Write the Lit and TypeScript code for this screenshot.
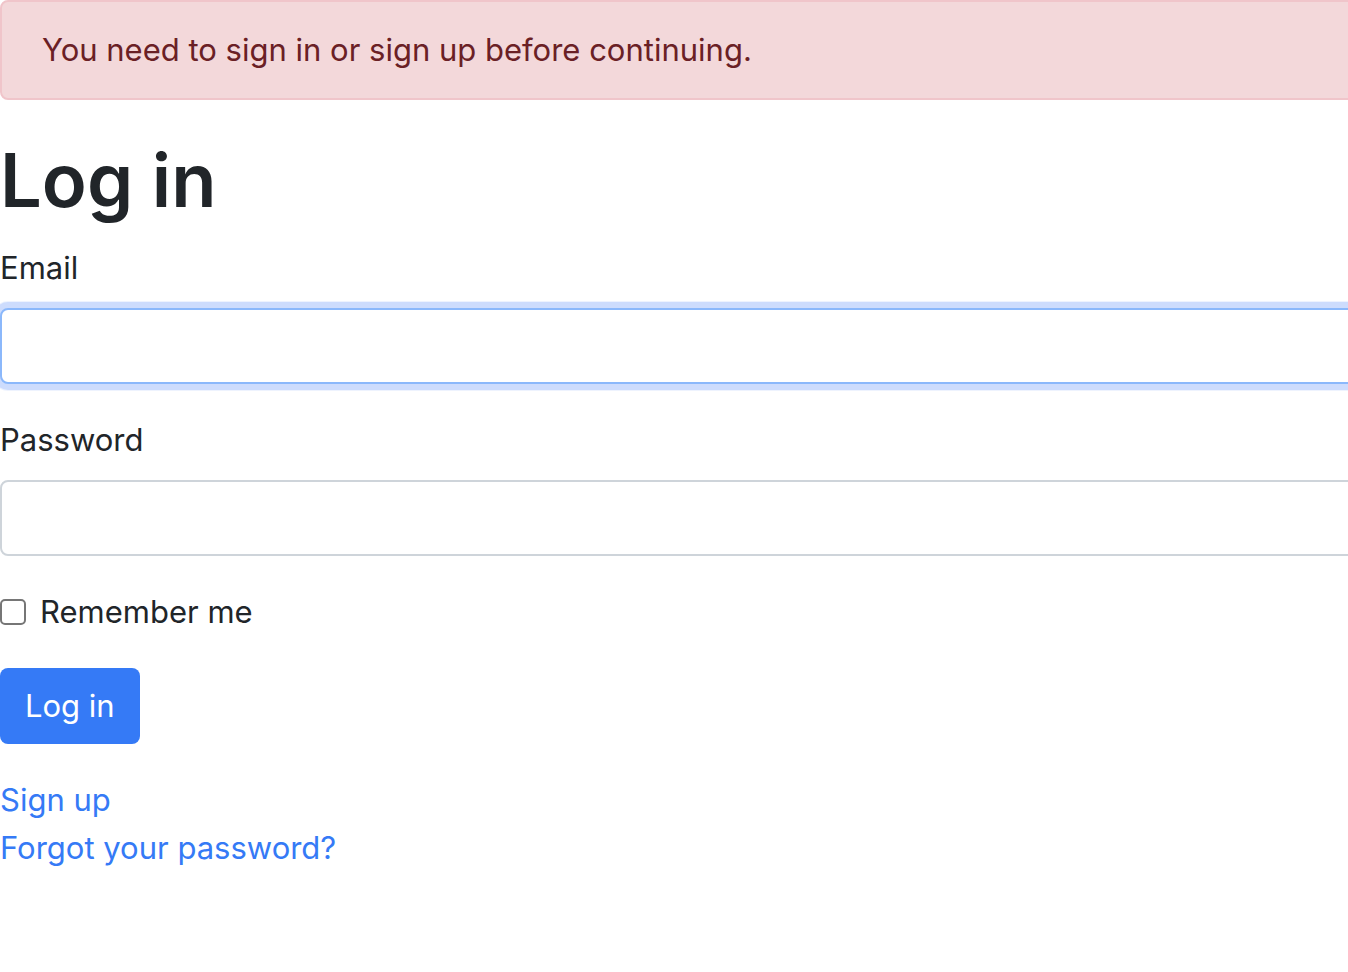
import { LitElement, html, css } from "lit";
import { customElement } from "lit/decorators.js";

@customElement("app-root")
export class AppRoot extends LitElement {
  static styles = css`
    :host {
      display: block;
      overflow-x: hidden;
      font-family: Inter, "Liberation Sans", sans-serif;
      font-size: 31px;
      line-height: 48px;
      color: #212529;
    }
    * {
      box-sizing: border-box;
    }
    .page {
      margin-right: -16px;
    }
    .alert {
      padding: 24px 40px;
      border: 2px solid #f0c5ca;
      border-radius: 8px;
      background: #f3d8da;
      color: #6a2025;
      margin-bottom: 32px;
    }
    h1 {
      margin: 0 0 16px;
      font-size: 74px;
      font-weight: 600;
      line-height: 96px;
    }
    .field {
      display: flex;
      flex-direction: column;
      gap: 16px;
      margin-bottom: 32px;
    }
    .input {
      width: 100%;
      height: 76px;
      padding: 12px 24px;
      border: 2px solid #ced4da;
      border-radius: 8px;
      background: #fff;
      font: inherit;
      color: inherit;
      outline: none;
    }
    .input.active {
      border-color: #8bb8fb;
      box-shadow: 0 0 0 6px #cddcfd, 0 0 0 7px #eef3fe;
    }
    .remember {
      display: flex;
      align-items: center;
      gap: 14px;
      margin-bottom: 32px;
    }
    .check {
      appearance: none;
      width: 26px;
      height: 26px;
      margin: 0;
      border: 2px solid #767676;
      border-radius: 5px;
      background: #fff;
    }
    .submit {
      display: block;
      height: 76px;
      padding: 0 25px;
      border: 0;
      border-radius: 8px;
      background: #357af6;
      color: #fff;
      font: inherit;
      margin-bottom: 32px;
    }
    .links {
      display: flex;
      flex-direction: column;
      align-items: flex-start;
    }
    a {
      color: #357af6;
      text-decoration: none;
    }
  `;

  render() {
    return html`
      <main class="page">
        <div class="alert" role="alert">You need to sign in or sign up before continuing.</div>
        <h1>Log in</h1>
        <form @submit=${(e: Event) => e.preventDefault()}>
          <div class="field">
            <label for="email">Email</label>
            <input class="input active" id="email" type="email" autocomplete="email" />
          </div>
          <div class="field">
            <label for="password">Password</label>
            <input class="input" id="password" type="password" autocomplete="current-password" />
          </div>
          <div class="remember">
            <input class="check" id="remember" type="checkbox" />
            <label for="remember">Remember me</label>
          </div>
          <button class="submit" type="submit">Log in</button>
        </form>
        <nav class="links">
          <a href="#sign-up">Sign up</a>
          <a href="#password">Forgot your password?</a>
        </nav>
      </main>
    `;
  }
}
